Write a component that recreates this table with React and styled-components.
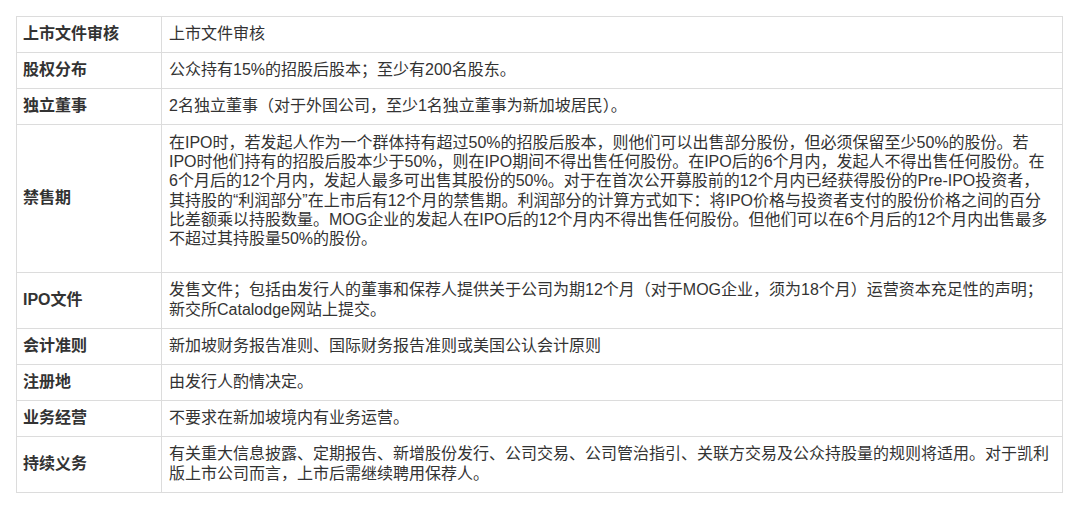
import React from "react";
import styled, { createGlobalStyle } from "styled-components";

const Global = createGlobalStyle`
  html, body { margin: 0; padding: 0; background: #fff; }
  body { font-family: "Liberation Sans", "Noto Sans CJK SC", sans-serif; }
`;

const Page = styled.div`
  padding: 16px 17px 18px 16px;
`;

const Table = styled.table`
  width: 1047px;
  border-collapse: collapse;
  table-layout: fixed;
  font-family: "Liberation Sans", "Noto Sans CJK SC", sans-serif;
  font-size: 16px;
  line-height: 20px;
  color: #333;
`;

const Row = styled.tr``;

const Head = styled.th`
  width: 131px;
  padding: 7px 7px 8px 6px;
  text-align: left;
  vertical-align: middle;
  font-weight: bold;
  border: 1px solid #dcdcdc;
`;

const Cell = styled.td`
  padding: ${(p) => (p.$long ? "8px 4px 24px 7px" : "7px 8px 8px 7px")};
  line-height: ${(p) => (p.$long ? "19.2px" : "20px")};
  text-align: left;
  vertical-align: ${(p) => (p.$long ? "top" : "middle")};
  font-weight: normal;
  border: 1px solid #dcdcdc;
`;

const Line = styled.span`
  display: block;
  white-space: nowrap;
`;

const rows = [
  ["上市文件审核", "上市文件审核"],
  ["股权分布", "公众持有15%的招股后股本；至少有200名股东。"],
  ["独立董事", "2名独立董事（对于外国公司，至少1名独立董事为新加坡居民）。"],
  [
    "禁售期",
    [
      "在IPO时，若发起人作为一个群体持有超过50%的招股后股本，则他们可以出售部分股份，但必须保留至少50%的股份。若",
      "IPO时他们持有的招股后股本少于50%，则在IPO期间不得出售任何股份。在IPO后的6个月内，发起人不得出售任何股份。在",
      "6个月后的12个月内，发起人最多可出售其股份的50%。对于在首次公开募股前的12个月内已经获得股份的Pre-IPO投资者，",
      "其持股的“利润部分”在上市后有12个月的禁售期。利润部分的计算方式如下：将IPO价格与投资者支付的股份价格之间的百分",
      "比差额乘以持股数量。MOG企业的发起人在IPO后的12个月内不得出售任何股份。但他们可以在6个月后的12个月内出售最多",
      "不超过其持股量50%的股份。",
    ],
  ],
  [
    "IPO文件",
    "发售文件；包括由发行人的董事和保荐人提供关于公司为期12个月（对于MOG企业，须为18个月）运营资本充足性的声明；新交所Catalodge网站上提交。",
  ],
  ["会计准则", "新加坡财务报告准则、国际财务报告准则或美国公认会计原则"],
  ["注册地", "由发行人酌情决定。"],
  ["业务经营", "不要求在新加坡境内有业务运营。"],
  [
    "持续义务",
    "有关重大信息披露、定期报告、新增股份发行、公司交易、公司管治指引、关联方交易及公众持股量的规则将适用。对于凯利版上市公司而言，上市后需继续聘用保荐人。",
  ],
];

export default function App() {
  return (
    <>
      <Global />
      <Page>
        <Table>
          <tbody>
            {rows.map(([k, v]) => {
              const long = Array.isArray(v);
              return (
                <Row key={k}>
                  <Head>{k}</Head>
                  <Cell $long={long}>
                    {long ? v.map((l) => <Line key={l}>{l}</Line>) : v}
                  </Cell>
                </Row>
              );
            })}
          </tbody>
        </Table>
      </Page>
    </>
  );
}
